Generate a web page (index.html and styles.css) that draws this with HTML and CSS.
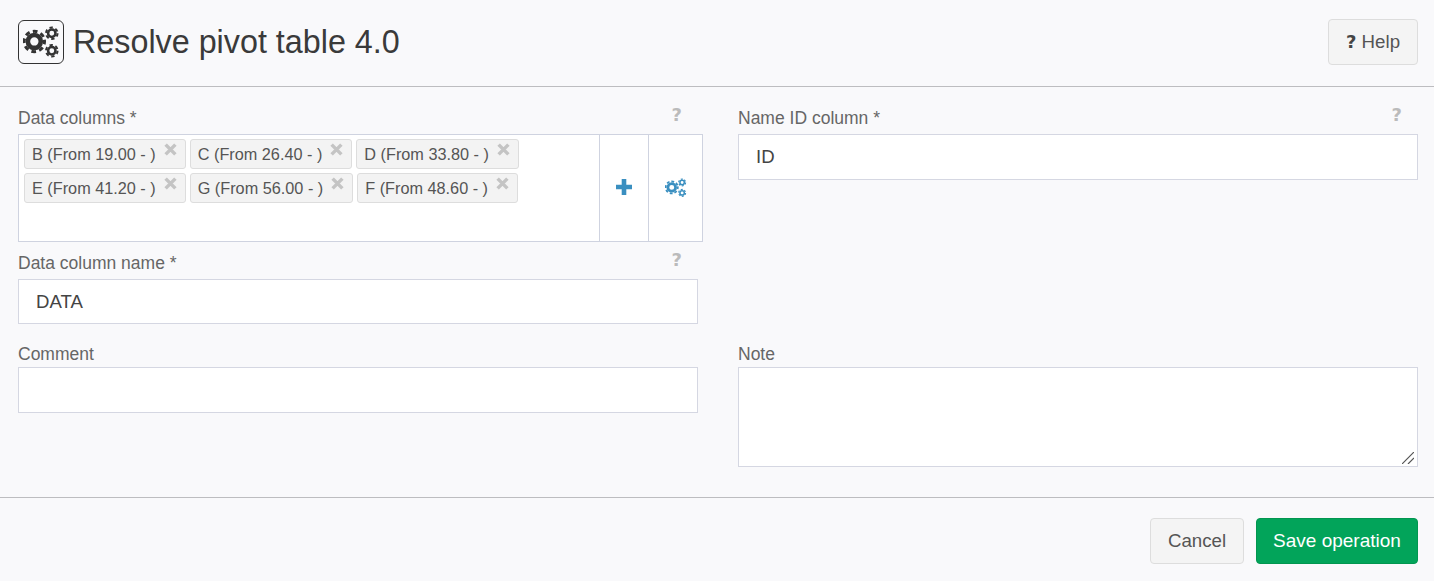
FILE: index.html
```html
<!DOCTYPE html>
<html lang="en">
<head>
<meta charset="utf-8">
<title>Resolve pivot table 4.0</title>
<link rel="stylesheet" href="styles.css">
</head>
<body>
<svg class="defs" width="0" height="0" aria-hidden="true">
  <symbol id="cogs" viewBox="0 0 32 32">
    <circle cx="9.8" cy="15.1" r="5.6" fill="none" stroke="currentColor" stroke-width="4"/>
    <circle cx="9.8" cy="15.1" r="8.8" fill="none" stroke="currentColor" stroke-width="2.6" stroke-dasharray="4 2.91" transform="rotate(-10 9.8 15.1)"/>
    <circle cx="24.9" cy="8" r="3.2" fill="none" stroke="currentColor" stroke-width="2.2"/>
    <circle cx="24.9" cy="8" r="5" fill="none" stroke="currentColor" stroke-width="1.7" stroke-dasharray="2.9 2.34"/>
    <circle cx="24.9" cy="23.1" r="3.2" fill="none" stroke="currentColor" stroke-width="2.2"/>
    <circle cx="24.9" cy="23.1" r="5" fill="none" stroke="currentColor" stroke-width="1.7" stroke-dasharray="2.9 2.34"/>
  </symbol>
  <symbol id="remove" viewBox="0 0 12 12">
    <path d="M1.5 1.5 10.5 10.5M10.5 1.5 1.5 10.5" fill="none" stroke="currentColor" stroke-width="3.2"/>
  </symbol>
</svg>

<header class="header">
  <div class="title-wrap">
    <span class="title-icon"><svg class="title-cogs"><use href="#cogs"/></svg></span>
    <h1 class="title">Resolve pivot table 4.0</h1>
  </div>
  <button class="btn btn-help" type="button"><span class="q-mark">?</span> Help</button>
</header>

<main class="form">
  <div class="col">
    <div class="label-row"><label class="label">Data columns *</label><span class="hint">?</span></div>
    <div class="picker">
      <div class="tags">
        <span class="tag">B (From 19.00 - )<svg class="tag-x"><use href="#remove"/></svg></span>
        <span class="tag">C (From 26.40 - )<svg class="tag-x"><use href="#remove"/></svg></span>
        <span class="tag">D (From 33.80 - )<svg class="tag-x"><use href="#remove"/></svg></span>
        <span class="tag">E (From 41.20 - )<svg class="tag-x"><use href="#remove"/></svg></span>
        <span class="tag">G (From 56.00 - )<svg class="tag-x"><use href="#remove"/></svg></span>
        <span class="tag">F (From 48.60 - )<svg class="tag-x"><use href="#remove"/></svg></span>
      </div>
      <div class="picker-btn picker-add"><svg class="plus" viewBox="0 0 16 16"><path d="M8 0v16M0 8h16" fill="none" stroke="currentColor" stroke-width="4.6"/></svg></div>
      <div class="picker-btn picker-cog"><svg class="blue-cogs"><use href="#cogs"/></svg></div>
    </div>
    <div class="label-row label-row-next"><label class="label">Data column name *</label><span class="hint">?</span></div>
    <input class="input input-data" type="text" value="DATA">
  </div>

  <div class="col">
    <div class="label-row"><label class="label">Name ID column *</label><span class="hint">?</span></div>
    <input class="input" type="text" value="ID">
  </div>

  <div class="col col-low">
    <div class="label-row label-row-tight"><label class="label">Comment</label></div>
    <input class="input input-comment" type="text">
  </div>

  <div class="col col-low">
    <div class="label-row label-row-tight"><label class="label">Note</label></div>
    <div class="textarea-wrap">
      <textarea class="textarea"></textarea>
      <svg class="grip" viewBox="0 0 12 12"><path d="M0 12 12 0M6 12 12 6" fill="none" stroke="currentColor" stroke-width="1.2"/></svg>
    </div>
  </div>
</main>

<footer class="footer">
  <button class="btn btn-cancel" type="button">Cancel</button>
  <button class="btn btn-save" type="button">Save operation</button>
</footer>
</body>
</html>
```
FILE: styles.css
```css
* { box-sizing: border-box; }

html, body { height: 100%; }

body {
  margin: 0;
  background: #f9f9fb;
  color: #333;
  font-family: "Liberation Sans", Arial, sans-serif;
  font-size: 16px;
  overflow: hidden;
}

.defs { position: absolute; }

.header {
  height: 87px;
  padding: 19px 16px 0 18px;
  display: flex;
  justify-content: space-between;
  align-items: flex-start;
  border-bottom: 1px solid #bdbdc0;
}

.title-wrap { display: flex; align-items: center; gap: 9px; height: 46px; }

.title-icon {
  width: 46px;
  height: 44px;
  border: 1px solid #333;
  border-radius: 6px;
  display: flex;
  align-items: center;
  justify-content: center;
  color: #333;
}

.title-cogs { width: 37px; height: 37px; }

.title {
  margin: 0;
  font-size: 32.3px;
  font-weight: 400;
  color: #3a3a3a;
  line-height: 46px;
}

.btn {
  font-family: inherit;
  font-size: 18.7px;
  height: 46px;
  border-radius: 4px;
  border: 1px solid #ddd;
  background: #f4f4f4;
  color: #555;
  cursor: pointer;
  padding: 0;
}

.btn-help { width: 90px; }

.q-mark { font-family: "DejaVu Sans", sans-serif; font-weight: 700; font-size: 18px; color: #444; }

.form {
  height: 411px;
  padding: 21px 16px 0 18px;
  display: grid;
  grid-template-columns: 680px 680px;
  grid-template-rows: 236px auto;
  column-gap: 40px;
  border-bottom: 1px solid #bdbdc0;
}

.col { display: flex; flex-direction: column; align-items: stretch; min-width: 0; }

.label-row {
  height: 20px;
  margin-bottom: 6px;
  padding-right: 16px;
  display: flex;
  justify-content: space-between;
  align-items: center;
  flex: none;
}

.label-row-next { margin-top: 11px; }
.label-row-tight { margin-bottom: 3px; }

.label {
  font-size: 17.5px;
  color: #666;
  line-height: 20px;
}

.hint {
  font-family: "DejaVu Sans", sans-serif;
  font-weight: 700;
  font-size: 18px;
  color: #bbb;
  line-height: 20px;
  position: relative;
  top: -3px;
}

.picker {
  width: 685px;
  height: 108px;
  display: flex;
  flex: none;
  background: #fff;
  border: 1px solid #cfd3e0;
}

.tags {
  width: 580px;
  padding: 4px 5px;
  display: flex;
  flex-wrap: wrap;
  align-content: flex-start;
  gap: 4px;
}

.tag {
  height: 30px;
  padding: 0 8px 0 7px;
  display: inline-flex;
  align-items: center;
  gap: 8px;
  background: #f3f3f3;
  border: 1px solid #ddd;
  border-radius: 3px;
  color: #555;
  font-size: 16.25px;
}

.tag-x { width: 13px; height: 13px; color: #c4c4c4; margin-top: -9px; }

.picker-btn {
  display: flex;
  align-items: center;
  justify-content: center;
  border-left: 1px solid #cfd3e0;
  color: #3a8fc0;
}

.picker-add { width: 49px; }
.picker-cog { width: 54px; }

.plus { width: 16px; height: 16px; margin-top: -2px; }
.blue-cogs { width: 22px; height: 22px; margin-top: -1px; }

.input {
  display: block;
  width: 100%;
  height: 46px;
  padding: 0 17px;
  background: #fff;
  border: 1px solid #d5d7e2;
  font-family: inherit;
  font-size: 18.6px;
  color: #444;
  outline: none;
}

.input-data { height: 45px; padding-top: 1px; }

.textarea-wrap { position: relative; height: 100px; }

.textarea {
  display: block;
  width: 100%;
  height: 100%;
  background: #fff;
  border: 1px solid #d5d7e2;
  font-family: inherit;
  font-size: 18px;
  outline: none;
  resize: none;
}

.grip {
  position: absolute;
  right: 4px;
  bottom: 3px;
  width: 12px;
  height: 12px;
  color: #555;
}

.footer {
  padding: 20px 16px 0 0;
  display: flex;
  justify-content: flex-end;
  gap: 12px;
}

.btn-cancel { width: 94px; }

.btn-save {
  width: 162px;
  background: #02a45a;
  border-color: #029650;
  color: #fff;
  font-size: 19px;
}
```
